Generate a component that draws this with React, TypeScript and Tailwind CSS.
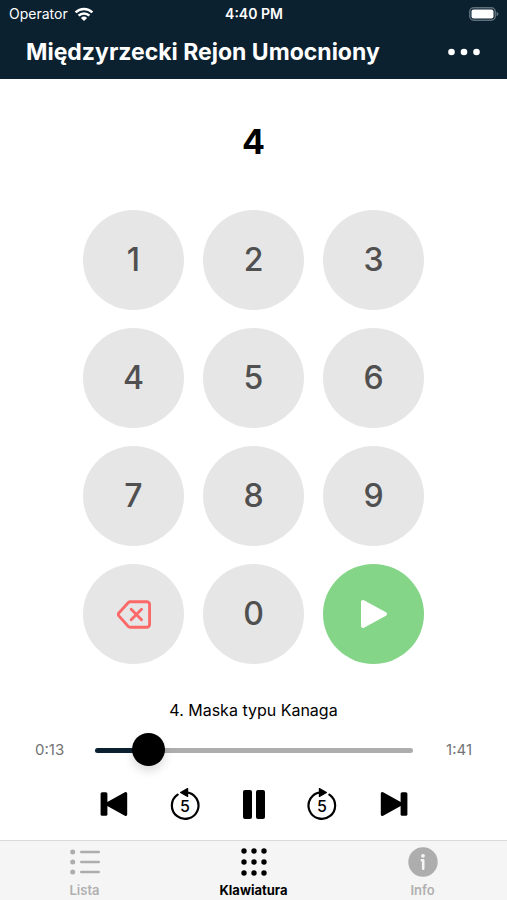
import { useState } from 'react';
import type { CSSProperties, ReactNode } from 'react';

const digits = ['1', '2', '3', '4', '5', '6', '7', '8', '9'];

function StatusBar() {
  return (
    <div className="grid h-7 grid-cols-3 items-center pr-2 pl-[9px] text-sm">
      <div className="flex items-center gap-1.5">
        <span>Operator</span>
        <svg width="20" height="15" viewBox="0 0 20 15" aria-label="Wi-Fi" fill="none" stroke="currentColor" strokeWidth="2.5">
          <path d="M1.6 5.4a12 12 0 0 1 16.8 0" />
          <path d="M4.6 8.6a7.7 7.7 0 0 1 10.8 0" />
          <path d="M10 14 6.9 10.9a4.4 4.4 0 0 1 6.2 0z" fill="currentColor" stroke="none" />
        </svg>
      </div>
      <span className="text-center font-semibold">4:40 PM</span>
      <svg className="justify-self-end" width="30" height="14" viewBox="0 0 30 14" aria-label="Bateria">
        <rect x="0.75" y="0.75" width="25.5" height="12.5" rx="4" fill="none" stroke="#5f6f7a" strokeWidth="1.5" />
        <rect x="2.5" y="2.5" width="22" height="9" rx="2" fill="#fff" />
        <path d="M27.5 4.8c2.6.8 2.6 3.6 0 4.4z" fill="#5f6f7a" />
      </svg>
    </div>
  );
}

function Key({ label, onClick, children, tone = 'bg-[#e6e6e6] text-[#505050]' }: { label: string; onClick?: () => void; children: ReactNode; tone?: string }) {
  return (
    <button type="button" aria-label={label} onClick={onClick} className={`flex h-[100px] items-center justify-center rounded-[50%] text-[32px] font-[450] ${tone}`}>
      {children}
    </button>
  );
}

function SkipIcon({ forward = false }: { forward?: boolean }) {
  return (
    <svg className={forward ? '-scale-x-100' : ''} width="28" height="26" viewBox="0 0 28 26" fill="currentColor">
      <rect x="0.6" y="1.2" width="6.8" height="23.6" rx="1.6" />
      <path d="M6.4 11.6 24.9 1.3a1.5 1.5 0 0 1 2.3 1.3v20.8a1.5 1.5 0 0 1-2.3 1.3L6.4 14.4z" />
    </svg>
  );
}

function JumpIcon({ forward = false }: { forward?: boolean }) {
  return (
    <span className="relative flex h-8 w-8 items-center justify-center">
      <svg className={`absolute inset-0 ${forward ? '-scale-x-100' : ''}`} width="32" height="32" viewBox="0 0 32 32" fill="none" stroke="currentColor" strokeWidth="2.2" strokeLinecap="round">
        <path d="M8.6 6.6A13.3 13.3 0 1 0 17.5 4.3" />
        <path d="M11.6 4.5 18.6.6v7.9z" fill="currentColor" strokeWidth="1.2" strokeLinejoin="round" />
      </svg>
      <span className="pt-1 text-base leading-5 font-medium">5</span>
    </span>
  );
}

function Tab({ label, active = false, children }: { label: string; active?: boolean; children: ReactNode }) {
  return (
    <a href="#" aria-current={active ? 'page' : undefined} className={`flex flex-col items-center gap-1 pt-[5px] text-[13px] leading-4 ${active ? 'font-bold text-black' : 'font-semibold text-[#b0b0b0]'}`}>
      <span className="flex h-8 items-center">{children}</span>
      {label}
    </a>
  );
}

export default function App() {
  const [entry, setEntry] = useState('4');
  const [position, setPosition] = useState(13);
  const duration = 101;
  const time = (s: number) => `${Math.floor(s / 60)}:${String(s % 60).padStart(2, '0')}`;
  const played = { '--played': `${(position / duration) * 100}%` } as CSSProperties;

  return (
    <div className="flex min-h-screen flex-col bg-white font-[Inter,'Liberation_Sans',sans-serif] text-black">
      <header className="bg-[#0b2130] pb-[9px] text-white">
        <StatusBar />
        <div className="flex h-[42px] items-center justify-between px-[26px] pt-1.5">
          <h1 className="text-[23px] font-bold whitespace-nowrap">Międzyrzecki Rejon Umocniony</h1>
          <button type="button" aria-label="Więcej">
            <svg width="34" height="8" viewBox="0 0 34 8" fill="currentColor">
              <circle cx="4.5" cy="4" r="3.3" />
              <circle cx="17" cy="4" r="3.3" />
              <circle cx="29.5" cy="4" r="3.3" />
            </svg>
          </button>
        </div>
      </header>

      <main className="flex flex-1 flex-col items-center">
        <output className="mt-[43px] block h-10 text-[34px] leading-10 font-bold">{entry}</output>

        <div className="mt-12 grid w-[341px] grid-cols-3 gap-x-[19px] gap-y-[18px]">
          {digits.map((d) => (
            <Key key={d} label={d} onClick={() => setEntry(entry + d)}>{d}</Key>
          ))}
          <Key label="Usuń" onClick={() => setEntry(entry.slice(0, -1))} tone="bg-[#e6e6e6] text-[#fa6868]">
            <svg width="34" height="29" viewBox="0 0 36 30" fill="none" stroke="currentColor" strokeWidth="3" strokeLinecap="round" strokeLinejoin="round">
              <path d="M14 1.5h17.5a3 3 0 0 1 3 3v21a3 3 0 0 1-3 3H14a3 3 0 0 1-2-.8L2 16.5a2.2 2.2 0 0 1 0-3L12 2.3a3 3 0 0 1 2-.8z" />
              <path d="m15 9.5 11 11M26 9.5l-11 11" />
            </svg>
          </Key>
          <Key label="0" onClick={() => setEntry(entry + '0')}>0</Key>
          <Key label="Odtwórz" tone="bg-[#85d588] text-white">
            <svg width="28" height="30" viewBox="0 0 28 30" fill="currentColor" stroke="currentColor" strokeWidth="4" strokeLinejoin="round">
              <path d="M3 3v24l22-12z" />
            </svg>
          </Key>
        </div>

        <section aria-label="Odtwarzacz" className="w-full">
          <p id="track-name" className="mt-9 text-center text-base leading-5">4. Maska typu Kanaga</p>
          <div className="mt-3 flex h-9 items-center px-[35px] text-[15px] text-[#737373]">
            <span className="w-[60px]">{time(position)}</span>
            <input
              type="range"
              aria-labelledby="track-name"
              min={0}
              max={duration}
              value={position}
              onChange={(e) => setPosition(Number(e.target.value))}
              style={played}
              className="h-9 min-w-0 flex-1 appearance-none bg-transparent [&::-webkit-slider-runnable-track]:h-[5px] [&::-webkit-slider-runnable-track]:rounded-full [&::-webkit-slider-runnable-track]:bg-[linear-gradient(to_right,#0b2130_var(--played),#adadad_var(--played))] [&::-webkit-slider-thumb]:-mt-[15px] [&::-webkit-slider-thumb]:size-[33px] [&::-webkit-slider-thumb]:appearance-none [&::-webkit-slider-thumb]:rounded-full [&::-webkit-slider-thumb]:bg-black [&::-webkit-slider-thumb]:shadow-[0_5px_10px_rgba(0,0,0,0.14)]"
            />
            <span className="w-[59px] text-right">{time(duration)}</span>
          </div>
          <div className="mx-auto mt-5 flex h-8 w-[308px] items-center justify-between">
            <button type="button" aria-label="Poprzedni"><SkipIcon /></button>
            <button type="button" aria-label="Cofnij o 5 sekund"><JumpIcon /></button>
            <button type="button" aria-label="Pauza" className="flex gap-1">
              <span className="h-[29px] w-[9px] rounded-xs bg-current" />
              <span className="h-[29px] w-[9px] rounded-xs bg-current" />
            </button>
            <button type="button" aria-label="Do przodu o 5 sekund"><JumpIcon forward /></button>
            <button type="button" aria-label="Następny"><SkipIcon forward /></button>
          </div>
        </section>
      </main>

      <nav className="grid h-[60px] grid-cols-3 border-t border-[#dadada] bg-[#f5f5f5]">
        <Tab label="Lista">
          <svg width="30" height="26" viewBox="0 0 30 26" fill="#adadad">
            {[3, 13, 23].map((y) => (
              <g key={y}>
                <circle cx="2.7" cy={y} r="2.5" />
                <rect x="10" y={y - 1.25} width="20" height="2.5" rx="1.25" />
              </g>
            ))}
          </svg>
        </Tab>
        <Tab label="Klawiatura" active>
          <svg width="28" height="28" viewBox="0 0 28 28" fill="currentColor">
            {[3, 14, 25].map((y) => [4, 14, 24].map((x) => <circle key={`${x}-${y}`} cx={x} cy={y} r="2.7" />))}
          </svg>
        </Tab>
        <Tab label="Info">
          <svg width="30" height="30" viewBox="0 0 30 30">
            <circle cx="15" cy="15" r="14.7" fill="#adadad" />
            <circle cx="15" cy="8.8" r="1.9" fill="#f5f5f5" />
            <path d="M13.8 13.2h1.4v8.6" fill="none" stroke="#f5f5f5" strokeWidth="2.6" strokeLinecap="round" strokeLinejoin="round" />
          </svg>
        </Tab>
      </nav>
    </div>
  );
}
